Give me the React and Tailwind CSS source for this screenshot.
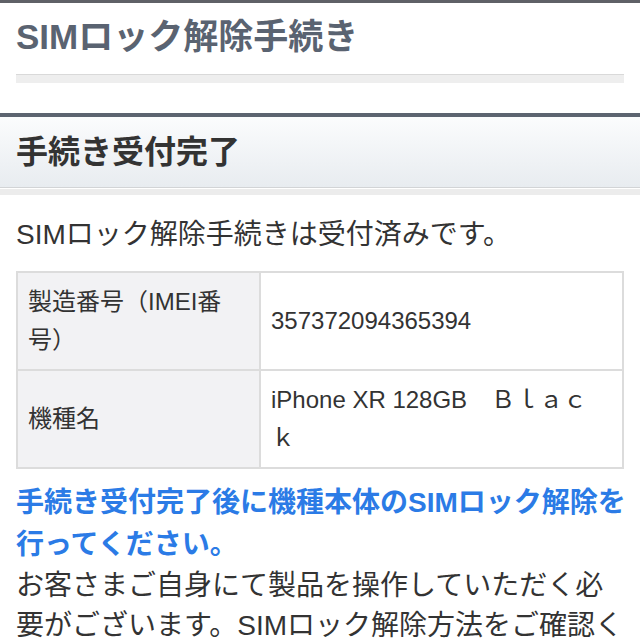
export default function App() {
  const font = { fontFamily: '"Liberation Sans", "Noto Sans CJK JP", sans-serif' };
  return (
    <div className="w-[640px] h-[640px] overflow-hidden bg-white text-[#333]" style={font}>
      <div className="border-t-[3px] border-[#5f6167]">
        <h1 className="px-4 pt-[13px] text-[35px] leading-[42px] font-bold text-[#5a6371]">
          SIMロック解除手続き
        </h1>
        <div className="mx-4 mt-[16px] h-[9px] border-t border-[#d9d9d9] bg-[#eeeeee]"></div>
        <div className="h-[30px]"></div>
      </div>
      <div className="border-t-[4px] border-[#5c6470] bg-gradient-to-b from-[#fbfcfd] to-[#e8ecf0] border-b border-b-[#d2d4d6] h-[75px] flex items-center px-4">
        <h2 className="text-[32px] font-bold leading-none text-[#333]">手続き受付完了</h2>
      </div>
      <div className="mt-px h-[6px] bg-[#ececec]"></div>
      <div className="px-4">
        <p className="mt-[19px] text-[28px] leading-[41px]">SIMロック解除手続きは受付済みです。</p>
        <table className="mt-[16px] w-[608px] border-collapse border-2 border-[#dcdcdc] text-[24px] leading-[38px] table-fixed">
          <tbody>
            <tr>
              <td className="w-[243px] border-2 border-[#dcdcdc] bg-[#f2f2f4] px-[10px] py-[10px] align-middle">
                製造番号（IMEI番<br />号）
              </td>
              <td className="border-2 border-[#dcdcdc] px-[10px] py-[10px] align-middle">357372094365394</td>
            </tr>
            <tr>
              <td className="border-2 border-[#dcdcdc] bg-[#f2f2f4] px-[10px] py-[10px] align-middle">機種名</td>
              <td className="border-2 border-[#dcdcdc] px-[10px] py-[10px] align-middle">
                iPhone XR 128GB　Ｂｌａｃ<br />ｋ
              </td>
            </tr>
          </tbody>
        </table>
        <p className="mt-[13px] text-[28px] leading-[42px] font-bold text-[#2b7be6] whitespace-nowrap">
          手続き受付完了後に機種本体のSIMロック解除を<br />行ってください。
        </p>
        <p className="text-[28px] leading-[40px] whitespace-nowrap">
          お客さまご自身にて製品を操作していただく必<br />要がございます。SIMロック解除方法をご確認く
        </p>
      </div>
    </div>
  );
}
